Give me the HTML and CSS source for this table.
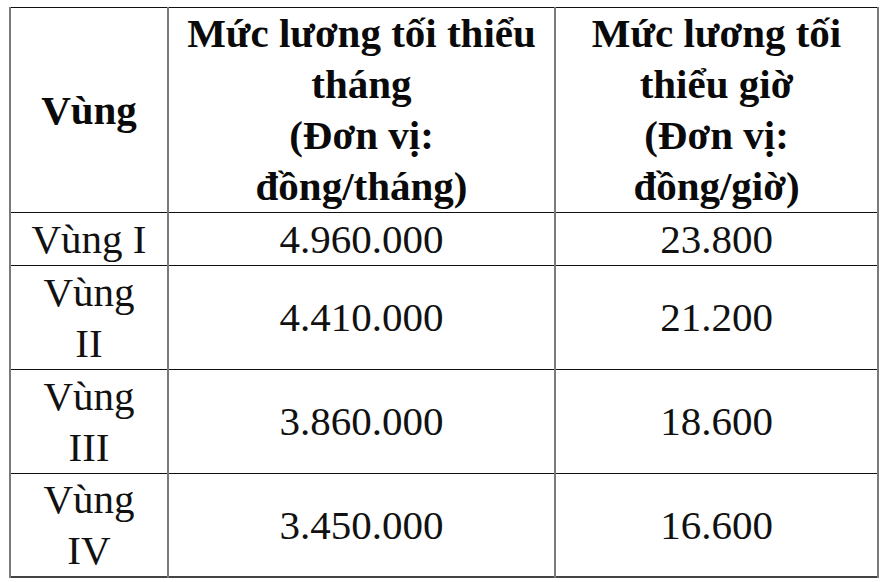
FILE: index.html
```html
<!DOCTYPE html>
<html lang="vi">
<head>
<meta charset="utf-8">
<title>Mức lương tối thiểu vùng</title>
<link rel="stylesheet" href="styles.css">
</head>
<body>
<table class="wage">
  <colgroup>
    <col class="c1">
    <col class="c2">
    <col class="c3">
  </colgroup>
  <thead>
    <tr class="head">
      <th>Vùng</th>
      <th>Mức lương tối thiểu<br>tháng<br>(Đơn vị:<br>đồng/tháng)</th>
      <th>Mức lương tối<br>thiểu giờ<br>(Đơn vị:<br>đồng/giờ)</th>
    </tr>
  </thead>
  <tbody>
    <tr class="r1"><td>Vùng I</td><td>4.960.000</td><td>23.800</td></tr>
    <tr class="r2"><td>Vùng<br>II</td><td>4.410.000</td><td>21.200</td></tr>
    <tr class="r2"><td>Vùng<br>III</td><td>3.860.000</td><td>18.600</td></tr>
    <tr class="r2 last"><td>Vùng<br>IV</td><td>3.450.000</td><td>16.600</td></tr>
  </tbody>
</table>
</body>
</html>
```

FILE: styles.css
```css
html, body {
  margin: 0;
  padding: 0;
  background: #ffffff;
}

body {
  padding: 7px 0 0 9px;
}

.wage {
  border-collapse: collapse;
  table-layout: fixed;
  width: 868px;
  font-family: "Liberation Serif", "Times New Roman", serif;
  font-size: 41px;
  line-height: 51px;
  color: #111111;
  border-top: 1px solid #333333;
  border-left: 2px solid #6e6e6e;
  border-right: 2px solid #444444;
  border-bottom: 2px solid #444444;
}

.c1 { width: 158px; }
.c2 { width: 387px; }
.c3 { width: 323px; }

.wage th,
.wage td {
  padding: 0;
  text-align: center;
  vertical-align: middle;
  border-left: 2px solid #7a7a7a;
  border-right: 2px solid #7a7a7a;
  border-top: 1px solid #111111;
  border-bottom: 1px solid #111111;
}

.wage th {
  font-weight: bold;
  color: #0a0a0a;
}

.head th { height: 202px; }
.r1 td { height: 52px; }
.r2 td { height: 103px; }
.last td { height: 102px; }
```
